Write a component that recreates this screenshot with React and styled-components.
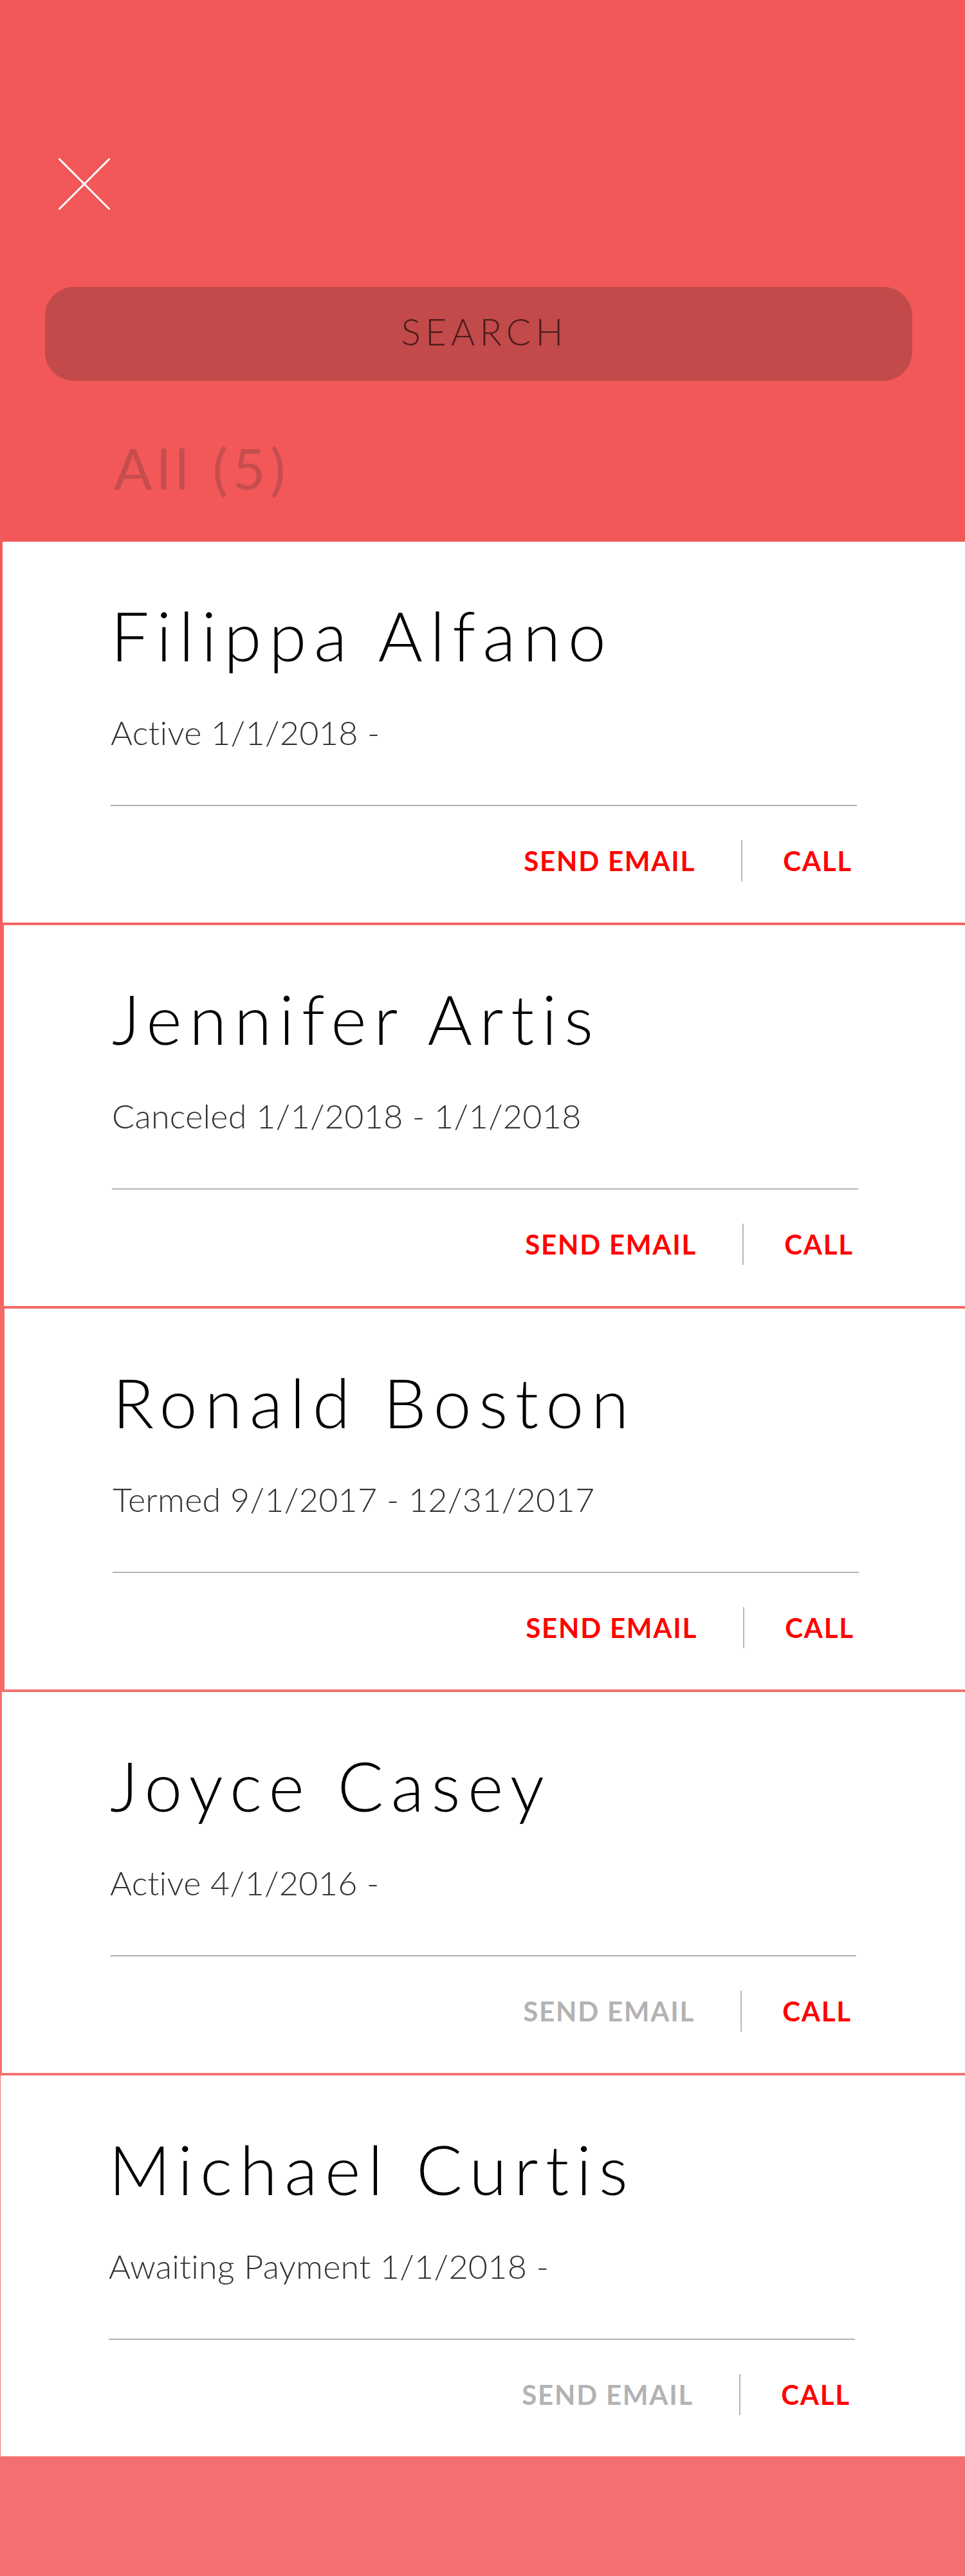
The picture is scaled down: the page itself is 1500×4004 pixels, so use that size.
import React from 'react'
import styled, { createGlobalStyle } from 'styled-components'

const GlobalStyle = createGlobalStyle`
  html, body {
    margin: 0;
    padding: 0;
    background: #ffffff;
  }
  body {
    font-family: Lato, "Open Sans", sans-serif;
    -webkit-font-smoothing: antialiased;
  }
  * {
    box-sizing: border-box;
  }
`

const Page = styled.div`
  display: flex;
  flex-direction: column;
  width: 1500px;
  min-height: 4004px;
`

const Header = styled.header`
  display: flex;
  flex-direction: column;
  height: 838px;
  padding: 246px 82px 0 70px;
  background: #f25858;
`

const CloseButton = styled.button`
  width: 80px;
  height: 80px;
  margin-left: 21px;
  padding: 0;
  border: 0;
  background: none;
  cursor: pointer;
  svg {
    display: block;
  }
`

const SearchBar = styled.div`
  display: flex;
  align-items: center;
  justify-content: center;
  height: 146px;
  margin-top: 120px;
  padding: 0 0 8px 18px;
  border-radius: 45px;
  background: #c34a4a;
  color: #4b1d1d;
  font-size: 57px;
  font-weight: 300;
  letter-spacing: 7px;
  text-transform: uppercase;
`

const Count = styled.div`
  margin-top: 91px;
  padding-left: 107px;
  color: #c64d4d;
  font-size: 88px;
  font-weight: 400;
  line-height: 1;
  letter-spacing: 7.5px;
`

const Card = styled.section`
  display: flex;
  flex-direction: column;
  height: 596px;
  padding: 92px 0 64px 168px;
  border-top: 4px solid ${p => p.$edgeColor};
  border-left: ${p => p.$edge}px solid ${p => p.$edgeColor};
  background: #ffffff;
`

const Content = styled.div`
  display: flex;
  flex-direction: column;
  width: 1160px;
`

const Name = styled.h2`
  margin: 0;
  color: #000000;
  font-size: 106px;
  font-weight: 300;
  line-height: 1;
  letter-spacing: 11.5px;
`

const Status = styled.p`
  margin: 72px 0 0;
  color: #333333;
  font-size: 52px;
  font-weight: 300;
  line-height: 1;
  letter-spacing: 0.3px;
`

const Divider = styled.hr`
  height: 2px;
  margin: 87px 0 0;
  border: 0;
  background: #b3b3b3;
`

const Actions = styled.div`
  display: flex;
  align-items: center;
  justify-content: flex-end;
  height: 64px;
  margin-top: 53px;
  padding-right: 7px;
`

const Action = styled.button`
  padding: 0;
  border: 0;
  background: none;
  color: ${p => (p.$disabled ? '#b3b3b3' : '#ff0000')};
  font-family: inherit;
  font-size: 42px;
  font-weight: 700;
  line-height: 1;
  letter-spacing: 1.8px;
  text-transform: uppercase;
  cursor: ${p => (p.$disabled ? 'default' : 'pointer')};
`

const Separator = styled.span`
  width: 2px;
  height: 64px;
  margin: 0 63px 0 71px;
  background: #b8b8b8;
`

const Footer = styled.footer`
  height: 186px;
  background: #f37070;
`

const members = [
  { name: 'Filippa Alfano', status: 'Active 1/1/2018 -', email: true, edge: 4, edgeColor: '#f35b5b' },
  { name: 'Jennifer Artis', status: 'Canceled 1/1/2018 - 1/1/2018', email: true, edge: 6, edgeColor: '#f46262' },
  { name: 'Ronald Boston', status: 'Termed 9/1/2017 - 12/31/2017', email: true, edge: 7, edgeColor: '#f56868' },
  { name: 'Joyce Casey', status: 'Active 4/1/2016 -', email: false, edge: 3, edgeColor: '#f46e6e' },
  { name: 'Michael Curtis', status: 'Awaiting Payment 1/1/2018 -', email: false, edge: 1, edgeColor: '#f47272' },
]

const MemberCard = ({ member }) => (
  <Card $edge={member.edge} $edgeColor={member.edgeColor}>
    <Content>
      <Name>{member.name}</Name>
      <Status>{member.status}</Status>
      <Divider />
      <Actions>
        <Action $disabled={!member.email}>Send Email</Action>
        <Separator />
        <Action>Call</Action>
      </Actions>
    </Content>
  </Card>
)

const App = () => {
  return (
    <Page>
      <GlobalStyle />
      <Header>
        <CloseButton aria-label="close">
          <svg width="80" height="80" viewBox="0 0 80 80">
            <path d="M1 1 L79 79 M79 1 L1 79" stroke="#ffffff" strokeWidth="3" strokeLinecap="round" fill="none" />
          </svg>
        </CloseButton>
        <SearchBar>Search</SearchBar>
        <Count>All (5)</Count>
      </Header>
      {members.map(m => (
        <MemberCard key={m.name} member={m} />
      ))}
      <Footer />
    </Page>
  )
}

export default App
